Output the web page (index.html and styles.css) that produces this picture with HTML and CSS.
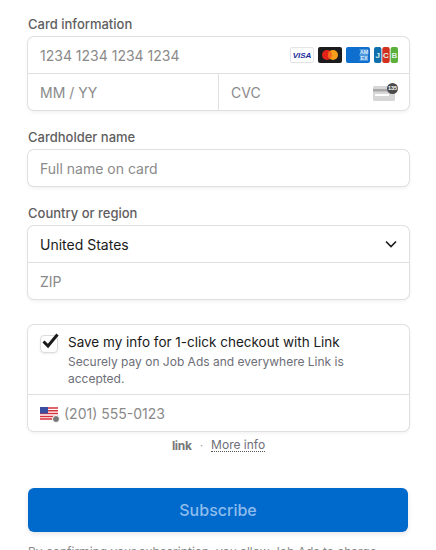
FILE: index.html
```html
<!DOCTYPE html>
<html lang="en">
<head>
  <meta charset="UTF-8">
  <meta name="viewport" content="width=device-width, initial-scale=1.0">
  <title>Subscribe</title>
  <link rel="stylesheet" href="styles.css">
</head>
<body>
  <form class="checkout">
    <div class="field-group">
      <div class="label">Card information</div>
      <div class="box">
        <div class="row">
          <span class="placeholder">1234 1234 1234 1234</span>
          <div class="card-icons">
            <svg width="24" height="16" viewBox="0 0 24 16"><rect x=".5" y=".5" width="23" height="15" rx="1.5" fill="#fff" stroke="#e3e3e8"/><text x="12" y="11" text-anchor="middle" class="visa-text">VISA</text></svg>
            <svg width="24" height="16" viewBox="0 0 24 16"><rect width="24" height="16" rx="2" fill="#1c1c1e"/><circle cx="9" cy="8" r="5" fill="#e2231a"/><circle cx="15" cy="8" r="5" fill="#f79e1b"/><path d="M12 4a5 5 0 0 1 0 8 5 5 0 0 1 0-8z" fill="#f2661f"/></svg>
            <svg width="24" height="16" viewBox="0 0 24 16"><rect width="24" height="16" rx="2" fill="#0f6fce"/><path d="M13 2h9v12h-9l2-3-2-3 2-3z" fill="#4d97dd"/><text x="18" y="7.4" text-anchor="middle" class="amex-text">AM</text><text x="18" y="13" text-anchor="middle" class="amex-text">EX</text></svg>
            <svg width="24" height="16" viewBox="0 0 24 16"><rect width="7.4" height="16" rx="2" fill="#0f70ae"/><rect x="8.3" width="7.4" height="16" rx="2" fill="#d2301f"/><rect x="16.6" width="7.4" height="16" rx="2" fill="#5bb03c"/><text x="3.7" y="11" text-anchor="middle" class="jcb-text">J</text><text x="12" y="11" text-anchor="middle" class="jcb-text">C</text><text x="20.3" y="11" text-anchor="middle" class="jcb-text">B</text></svg>
          </div>
        </div>
        <div class="row-split">
          <div class="row"><span class="placeholder">MM / YY</span></div>
          <div class="row">
            <span class="placeholder">CVC</span>
            <svg class="cvc-icon" width="25" height="18" viewBox="0 0 25 18"><rect y="3" width="22" height="15" rx="1.5" fill="#d6d6d6"/><rect y="6" width="22" height="2.5" fill="#a8a8a8"/><rect x="2" y="11" width="14" height="2" fill="#fff"/><circle cx="19.5" cy="5.5" r="5.5" fill="#4a4a4a"/><text x="19.5" y="7.4" text-anchor="middle" class="cvc-text">135</text></svg>
          </div>
        </div>
      </div>
    </div>

    <div class="field-group">
      <div class="label">Cardholder name</div>
      <div class="box">
        <div class="row"><span class="placeholder">Full name on card</span></div>
      </div>
    </div>

    <div class="field-group">
      <div class="label">Country or region</div>
      <div class="box">
        <div class="row">
          <span class="value">United States</span>
          <svg class="chevron" width="12" height="8" viewBox="0 0 12 8"><path d="M1 1.5l5 5 5-5" fill="none" stroke="#1a1a1a" stroke-width="1.6"/></svg>
        </div>
        <div class="row"><span class="placeholder">ZIP</span></div>
      </div>
    </div>

    <div class="box link-box">
      <div class="save-row">
        <span class="checkbox">
          <svg class="check" width="20" height="18" viewBox="0 0 20 18"><path d="M3.5 9.5l4.5 4.5L17.5 2.5" fill="none" stroke="#1a1a1a" stroke-width="3"/></svg>
        </span>
        <div class="save-text">
          <div class="save-title">Save my info for 1-click checkout with Link</div>
          <div class="save-desc">Securely pay on Job Ads and everywhere Link is accepted.</div>
        </div>
      </div>
      <div class="phone-row">
        <span class="flag">
          <svg width="18" height="13" viewBox="0 0 18 13"><rect width="18" height="13" rx="1.5" fill="#fff"/><path d="M0 1h18M0 3.8h18M0 6.6h18M0 9.4h18M0 12h18" stroke="#d8323c" stroke-width="1.5"/><rect width="8" height="6.5" fill="#3a4fa0"/></svg>
          <span class="flag-badge"></span>
        </span>
        <span class="placeholder">(201) 555-0123</span>
      </div>
    </div>

    <div class="link-note">
      <span class="link-logo">link</span>
      <span class="dot">·</span>
      <span class="more-info">More info</span>
    </div>

    <button class="subscribe" type="button">Subscribe</button>
    <p class="legal">By confirming your subscription, you allow Job Ads to charge</p>
  </form>
</body>
</html>
```

FILE: styles.css
```css
html, body {
  height: 550px;
  overflow: hidden;
}

body {
  font-family: Inter, "Liberation Sans", sans-serif;
  background-color: #fff;
  color: #1a1a1a;
  margin: 0;
  padding: 0;
}

.checkout {
  display: flex;
  flex-direction: column;
  width: 381px;
  margin-left: 28px;
  padding-top: 16px;
}

.field-group {
  margin-bottom: 19px;
}

.label {
  font-size: 13px;
  font-weight: 500;
  line-height: 16px;
  color: #5e5e5e;
  margin-bottom: 5px;
}

.box {
  border-radius: 6px;
  box-shadow: 0 0 0 1px #e0e0e0, 0 2px 4px rgba(0, 0, 0, 0.07);
  background: #fff;
}

.row {
  display: flex;
  align-items: center;
  justify-content: space-between;
  height: 36px;
  padding: 0 12px;
  font-size: 14px;
}

.row + .row,
.row-split {
  border-top: 1px solid #e0e0e0;
}

.row-split {
  display: grid;
  grid-template-columns: 190px 1fr;
}

.row-split .row + .row {
  border-top: 0;
  border-left: 1px solid #e0e0e0;
}

.placeholder {
  color: #8a8a8a;
  font-size: 14px;
}

.value {
  color: #1a1a1a;
}

.card-icons {
  display: flex;
  gap: 4px;
  margin-right: -1px;
}

.card-icons svg {
  display: block;
}

.visa-text {
  font: italic 700 8px "Liberation Sans", sans-serif;
  fill: #1a2a9c;
}

.amex-text {
  font: 700 5.5px "Liberation Sans", sans-serif;
  fill: #d8e8f8;
}

.jcb-text {
  font: 700 8px "Liberation Sans", sans-serif;
  fill: #dff0e8;
}

.cvc-text {
  font: 700 5.5px "Liberation Sans", sans-serif;
  fill: #fff;
}

.cvc-icon {
  margin-right: -1px;
}

.chevron {
  margin-right: 0;
}

.link-box {
  margin-top: 7px;
}

.save-row {
  display: flex;
  gap: 10px;
  padding: 8px 12px 7px;
  border-bottom: 1px solid #e0e0e0;
}

.checkbox {
  position: relative;
  flex: none;
  width: 16px;
  height: 16px;
  margin-top: 2px;
  border: 1px solid #dcdcdc;
  border-radius: 4px;
  box-shadow: 0 1px 2px rgba(0, 0, 0, 0.08);
}

.check {
  position: absolute;
  top: -4px;
  left: -1px;
}

.save-title {
  font-size: 13.5px;
  line-height: 18px;
  color: #1a1a1a;
}

.save-desc {
  font-size: 12px;
  line-height: 17px;
  margin-top: 2px;
  color: #6d6e78;
}

.phone-row {
  display: flex;
  align-items: center;
  gap: 6px;
  height: 36px;
  padding: 0 12px;
}

.flag {
  position: relative;
  display: flex;
  width: 18px;
  height: 13px;
}

.flag-badge {
  position: absolute;
  right: -2px;
  bottom: -3px;
  width: 6px;
  height: 6px;
  border-radius: 50%;
  background: #777;
  border: 1px solid #fff;
}

.link-note {
  display: flex;
  justify-content: center;
  align-items: center;
  gap: 8px;
  height: 16px;
  margin-top: 6px;
  margin-bottom: 35px;
  font-size: 12px;
  color: #6d6e78;
}

.link-logo {
  font-weight: 700;
  letter-spacing: -0.3px;
  color: #777;
}

.dot {
  color: #aaa;
}

.more-info {
  border-bottom: 1px dotted #555;
  line-height: 13px;
}

.subscribe {
  display: block;
  width: 380px;
  height: 44px;
  border: 0;
  border-radius: 6px;
  background: #0069cc;
  color: #8ebdec;
  font-family: inherit;
  font-size: 16px;
  font-weight: 500;
  box-shadow: 0 2px 5px rgba(0, 0, 0, 0.1);
}

.legal {
  margin: 12px 0 0;
  font-size: 12px;
  line-height: 16px;
  color: #8a8a8a;
}
```
